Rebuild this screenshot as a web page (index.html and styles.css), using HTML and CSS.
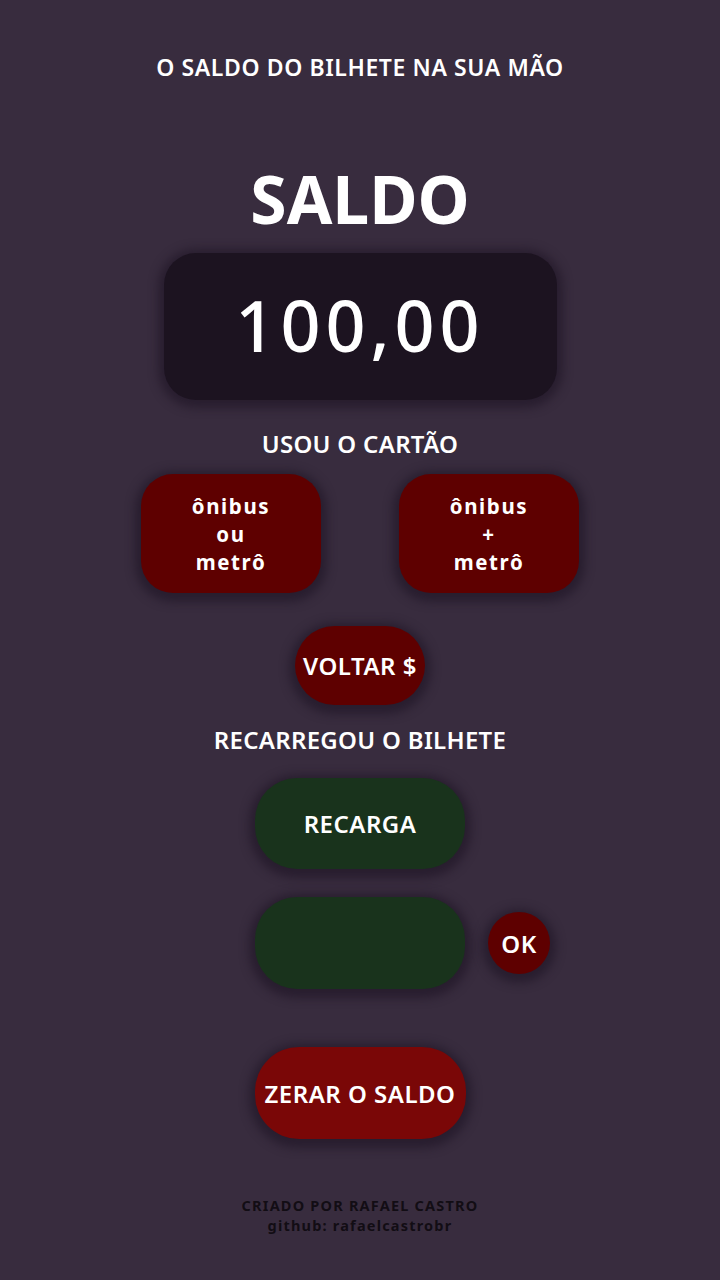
FILE: index.html
```html
<!DOCTYPE html>
<html lang="pt-BR">
<head>
<meta charset="utf-8">
<title>Saldo do Bilhete</title>
<link rel="stylesheet" href="styles.css">
</head>
<body>
<main class="app">
  <h1 class="header">O SALDO DO BILHETE NA SUA MÃO</h1>
  <h2 class="saldo-title">SALDO</h2>
  <div class="display">100,00</div>
  <p class="label label-usou">USOU O CARTÃO</p>
  <div class="row">
    <button class="btn btn-red btn-trip"><span class="ln">ônibus</span><span class="ln">ou</span><span class="ln">metrô</span></button>
    <button class="btn btn-red btn-trip"><span class="ln">ônibus</span><span class="ln">+</span><span class="ln">metrô</span></button>
  </div>
  <button class="btn btn-red btn-voltar">VOLTAR $</button>
  <p class="label label-recarga">RECARREGOU O BILHETE</p>
  <button class="btn btn-green btn-recarga">RECARGA</button>
  <div class="input-row">
    <input class="input-valor" type="text" aria-label="valor">
    <button class="btn btn-red btn-ok">OK</button>
  </div>
  <button class="btn btn-zerar">ZERAR O SALDO</button>
  <footer class="footer">
    <div>CRIADO POR RAFAEL CASTRO</div>
    <div>github: rafaelcastrobr</div>
  </footer>
</main>
</body>
</html>
```
FILE: styles.css
```css
html, body {
  margin: 0;
  padding: 0;
}
body {
  background: #382c3e;
  color: #ffffff;
  font-family: "Noto Sans", "Open Sans", sans-serif;
  min-height: 1280px;
}
.app {
  display: flex;
  flex-direction: column;
  align-items: center;
}
.header {
  margin: 53px 0 0;
  font-size: 23px;
  line-height: 28px;
  font-weight: 600;
  letter-spacing: 0.6px;
}
.saldo-title {
  margin: 77px 0 0;
  font-size: 66px;
  line-height: 80px;
  font-weight: 700;
}
.display {
  margin-top: 15px;
  width: 393px;
  height: 147px;
  border-radius: 32px;
  background: #1c1320;
  box-shadow: 0 2px 10px 6px rgba(30, 20, 36, 0.6);
  display: flex;
  align-items: center;
  justify-content: center;
  font-size: 70px;
  font-weight: 500;
  letter-spacing: 5px;
  padding-bottom: 4px;
  box-sizing: border-box;
}
.label {
  margin: 30px 0 0;
  font-size: 24px;
  line-height: 28px;
  font-weight: 600;
  letter-spacing: 0.3px;
}
.label-recarga {
  margin-top: 21px;
}
.btn {
  border: none;
  color: #ffffff;
  font-family: inherit;
  font-weight: 600;
  font-size: 24px;
  letter-spacing: 0.5px;
  padding: 0;
  cursor: pointer;
  box-shadow: 0 3px 10px 6px rgba(30, 20, 36, 0.6);
}
.btn-red {
  background: #5e0000;
}
.btn-green {
  background: #19331c;
}
.row {
  margin-top: 16px;
  display: flex;
  gap: 78px;
}
.btn-trip {
  width: 180px;
  height: 119px;
  border-radius: 32px;
  display: flex;
  flex-direction: column;
  align-items: center;
  justify-content: center;
  font-size: 20.5px;
  font-weight: 700;
  letter-spacing: 1.6px;
  line-height: 28px;
}
.ln {
  display: block;
  height: 28px;
}
.btn-voltar {
  margin-top: 33px;
  width: 130px;
  height: 79px;
  border-radius: 40px;
}
.btn-recarga {
  margin-top: 24px;
  width: 210px;
  height: 91px;
  border-radius: 42px;
}
.input-row {
  margin-top: 28px;
  width: 100%;
  display: grid;
  grid-template-columns: 1fr 210px 1fr;
  align-items: center;
}
.input-valor {
  grid-column: 2;
  width: 210px;
  height: 92px;
  border: none;
  border-radius: 42px;
  background: #19331c;
  box-shadow: 0 3px 10px 6px rgba(30, 20, 36, 0.6);
  outline: none;
  box-sizing: border-box;
}
.btn-ok {
  grid-column: 3;
  justify-self: start;
  margin-left: 23px;
  width: 62px;
  height: 62px;
  border-radius: 50%;
}
.btn-zerar {
  margin-top: 58px;
  width: 211px;
  height: 92px;
  border-radius: 44px;
  background: #7a0707;
}
.footer {
  margin-top: 56px;
  text-align: center;
  color: #120d14;
  font-size: 14.5px;
  line-height: 20px;
  font-weight: 700;
  letter-spacing: 1.2px;
}
```
